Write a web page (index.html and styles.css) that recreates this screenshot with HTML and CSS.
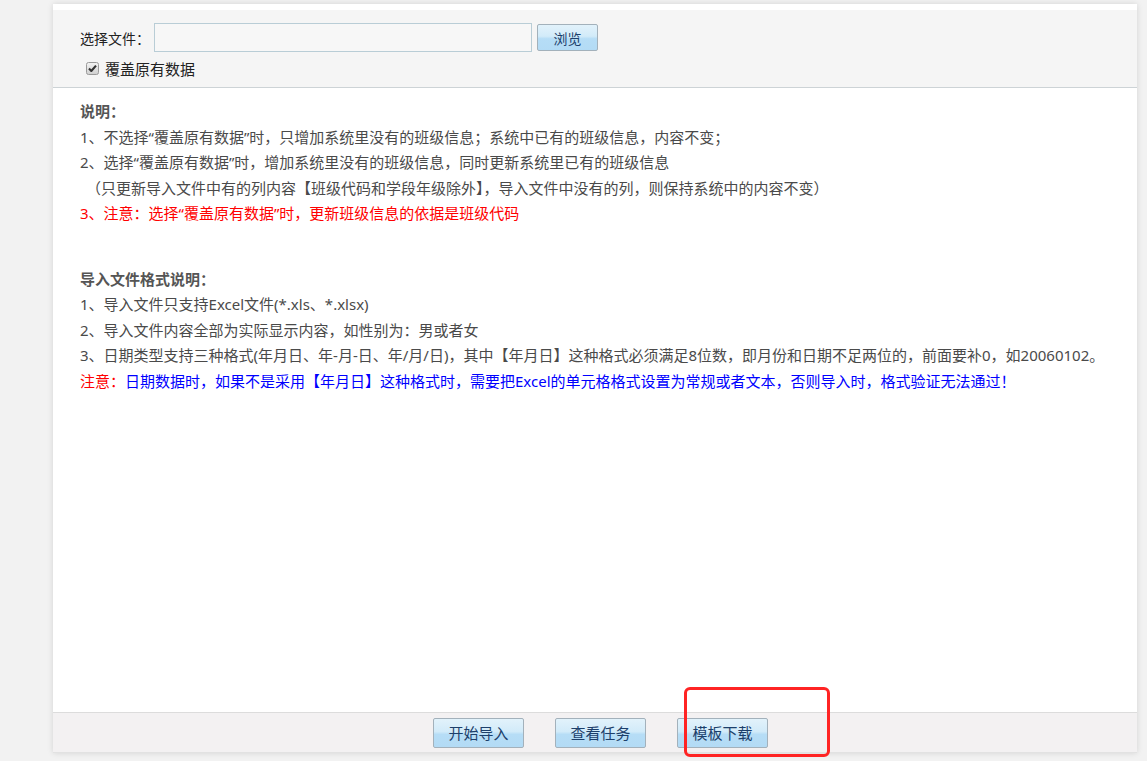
FILE: index.html
```html
<!DOCTYPE html>
<html lang="zh-CN">
<head>
    <meta charset="UTF-8">
    <title>导入班级信息</title>
    <link rel="stylesheet" href="styles.css">
</head>
<body>

    <div class="panel">
        <div class="toolbar">
            <div class="file-row">
                <label class="file-label" for="file">选择文件：</label>
                <input class="file-input" type="text" id="file">
                <button class="btn btn-browse" type="button">浏览</button>
            </div>
            <label class="check-row">
                <span class="check">
                    <svg width="13" height="13" viewBox="0 0 13 13">
                        <defs>
                            <linearGradient id="cb" x1="0" y1="0" x2="0" y2="1">
                                <stop offset="0" stop-color="#f4f4f4"/>
                                <stop offset="1" stop-color="#cfcfcf"/>
                            </linearGradient>
                        </defs>
                        <rect x="0.5" y="0.5" width="12" height="12" rx="2" fill="url(#cb)" stroke="#9a9a9a"/>
                        <path d="M3 6.6 L5.3 9 L10 3.6" fill="none" stroke="#333" stroke-width="2.1" stroke-linejoin="round"/>
                    </svg>
                </span>
                覆盖原有数据
            </label>
        </div>

        <div class="notes">
            <div class="note-block">
                <p class="note-title">说明：</p>
                <p>1、不选择“覆盖原有数据”时，只增加系统里没有的班级信息；系统中已有的班级信息，内容不变；</p>
                <p>2、选择“覆盖原有数据”时，增加系统里没有的班级信息，同时更新系统里已有的班级信息</p>
                <p class="indent">（只更新导入文件中有的列内容【班级代码和学段年级除外】，导入文件中没有的列，则保持系统中的内容不变）</p>
                <p class="red">3、注意：选择“覆盖原有数据”时，更新班级信息的依据是班级代码</p>
            </div>

            <div class="note-block format">
                <p class="note-title">导入文件格式说明：</p>
                <p>1、导入文件只支持Excel文件(*.xls、*.xlsx)</p>
                <p>2、导入文件内容全部为实际显示内容，如性别为：男或者女</p>
                <p>3、日期类型支持三种格式(年月日、年-月-日、年/月/日)，其中【年月日】这种格式必须满足8位数，即月份和日期不足两位的，前面要补0，如20060102。</p>
                <p><span class="red">注意：</span><span class="blue">日期数据时，如果不是采用【年月日】这种格式时，需要把Excel的单元格格式设置为常规或者文本，否则导入时，格式验证无法通过！</span></p>
            </div>
        </div>

        <div class="actions">
            <button class="btn btn-action" type="button">开始导入</button>
            <button class="btn btn-action" type="button">查看任务</button>
            <button class="btn btn-action" type="button">模板下载</button>
        </div>

        <div class="mark"></div>
    </div>

</body>
</html>
```

FILE: styles.css
```css
body {
    margin: 0;
    padding: 0;
    min-height: 100vh;
    background-color: #f2f2f2;
    font-family: "Noto Sans", "Noto Sans CJK SC", sans-serif;
    color: #4a4a4a;
}

.panel {
    position: relative;
    margin: 4px 0 0 53px;
    width: 1084px;
    height: 749px;
    display: flex;
    flex-direction: column;
    background-color: #fff;
    border-top: 6px solid #fff;
    box-sizing: border-box;
    box-shadow: 0 0 6px rgba(0, 0, 0, 0.13);
}

.toolbar {
    background-color: #f5f5f5;
    border-bottom: 1px solid #cdd3d6;
    height: 78px;
    box-sizing: border-box;
    padding: 13px 0 0 27px;
}

.file-row {
    display: flex;
    align-items: center;
    height: 29px;
}

.file-label {
    font-family: "Noto Sans CJK SC", sans-serif;
    font-size: 14px;
    color: #222;
    width: 74px;
}

.file-input {
    width: 378px;
    height: 29px;
    box-sizing: border-box;
    border: 1px solid #b9cdd6;
    background-color: #f7f7f7;
    margin: 0;
    padding: 0 4px;
}

.btn {
    font-family: "Noto Sans CJK SC", sans-serif;
    color: #1c3f6b;
    background: linear-gradient(to bottom, #e2f2fb 0%, #d2ebf9 45%, #b6ddf6 55%, #b3dbf5 100%);
    border: 1px solid #a3b1bb;
    border-radius: 2px;
    padding: 0;
    cursor: pointer;
}

.btn-browse {
    width: 61px;
    height: 27px;
    margin-left: 5px;
    font-size: 14px;
}

.check-row {
    display: flex;
    align-items: center;
    margin: 5px 0 0 6px;
    font-family: "Noto Sans CJK SC", sans-serif;
    font-size: 15px;
    color: #222;
    height: 22px;
}

.check {
    display: inline-flex;
    margin-right: 6px;
}

.notes {
    flex: 1;
    padding: 11px 0 0 27px;
    font-size: 15px;
}

.notes p {
    margin: 0;
    line-height: 25.5px;
    white-space: nowrap;
}

.notes .indent {
    padding-left: 6px;
}

.note-title {
    font-weight: bold;
    color: #555;
}

.format {
    margin-top: 40px;
}

.red {
    color: #f00;
}

.blue {
    color: #00f;
}

.actions {
    height: 41px;
    box-sizing: border-box;
    background-color: #f3f1f2;
    border-top: 1px solid #dcdcdc;
    border-bottom: 1px solid #e2e2e2;
    display: flex;
    justify-content: center;
    align-items: center;
    gap: 31px;
    padding-left: 11px;
}

.btn-action {
    width: 91px;
    height: 30px;
    font-size: 15px;
}

.mark {
    position: absolute;
    left: 631px;
    top: 677px;
    width: 146px;
    height: 70px;
    box-sizing: border-box;
    border: 3px solid #ff2424;
    border-radius: 6px;
}
```
